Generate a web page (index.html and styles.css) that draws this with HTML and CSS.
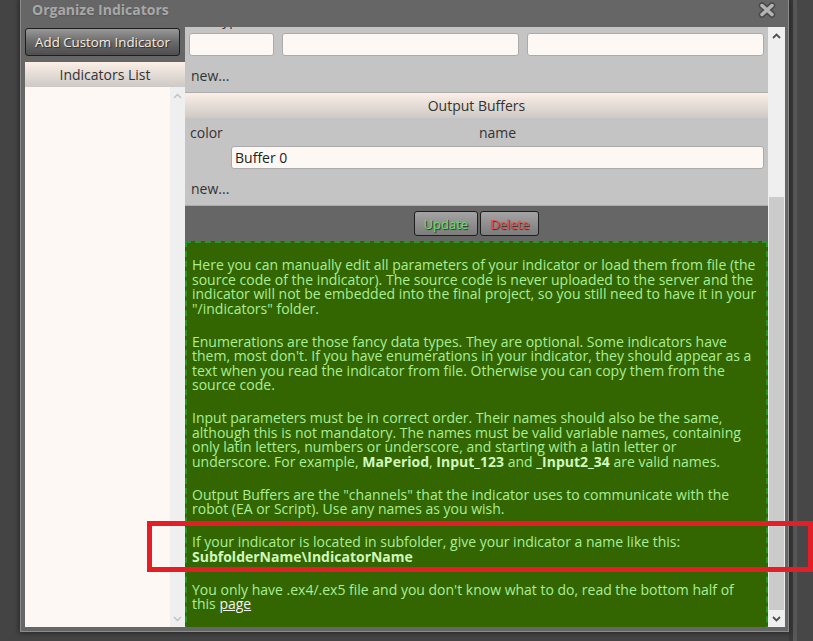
FILE: index.html
```html
<!DOCTYPE html>
<html>
<head>
<meta charset="utf-8">
<title>Organize Indicators</title>
<link rel="stylesheet" href="styles.css">
</head>
<body>
<div class="dialog">
  <div class="titlebar">
    <span class="title">Organize Indicators</span>
    <svg class="close" width="18" height="16" viewBox="0 0 18 16">
      <path d="M4 3.5 L14 12.5 M14 3.5 L4 12.5" stroke="#4a4a4a" stroke-width="6.5" stroke-linecap="round" fill="none"/>
      <path d="M4 3.5 L14 12.5 M14 3.5 L4 12.5" stroke="#b4b4b4" stroke-width="3.5" stroke-linecap="round" fill="none"/>
    </svg>
  </div>
  <div class="body">
    <div class="left">
      <button class="btn add">Add Custom Indicator</button>
      <div class="list">
        <div class="list-head">Indicators List</div>
        <div class="list-body">
          <div class="list-items"></div>
          <div class="sb sb-list">
            <div class="arrow-box"><svg width="9" height="6" viewBox="0 0 9 6"><path d="M1 5 L4.5 1.5 L8 5" stroke="#c0c0c0" stroke-width="1.4" fill="none"/></svg></div>
            <div class="sb-space"></div>
            <div class="arrow-box"><svg width="9" height="6" viewBox="0 0 9 6"><path d="M1 1 L4.5 4.5 L8 1" stroke="#c0c0c0" stroke-width="1.4" fill="none"/></svg></div>
          </div>
        </div>
      </div>
    </div>
    <div class="right">
      <div class="viewport">
        <div class="scroll">
          <div class="sec">
            <div class="sec-head">Input Parameters</div>
            <div class="grid3 labels">
              <span>type</span><span>name</span><span>default value</span>
            </div>
            <div class="grid3 inputs">
              <div class="field"></div><div class="field"></div><div class="field"></div>
            </div>
            <div class="new">new...</div>
          </div>
          <div class="sec">
            <div class="sec-head">Output Buffers</div>
            <div class="grid2 labels">
              <span class="lbl-left">color</span><span>name</span>
            </div>
            <div class="grid2 inputs">
              <div></div><div class="field">Buffer 0</div>
            </div>
            <div class="new">new...</div>
          </div>
          <div class="actions">
            <button class="btn small update">Update</button>
            <button class="btn small delete">Delete</button>
          </div>
          <div class="help">
            <p>Here you can manually edit all parameters of your indicator or load them from file (the<br>source code of the indicator). The source code is never uploaded to the server and the<br>indicator will not be embedded into the final project, so you still need to have it in your<br>"/indicators" folder.</p>
            <p>Enumerations are those fancy data types. They are optional. Some indicators have<br>them, most don't. If you have enumerations in your indicator, they should appear as a<br>text when you read the indicator from file. Otherwise you can copy them from the<br>source code.</p>
            <p>Input parameters must be in correct order. Their names should also be the same,<br>although this is not mandatory. The names must be valid variable names, containing<br>only latin letters, numbers or underscore, and starting with a latin letter or<br>underscore. For example, <b>MaPeriod</b>, <b>Input_123</b> and <b>_Input2_34</b> are valid names.</p>
            <p>Output Buffers are the "channels" that the indicator uses to communicate with the<br>robot (EA or Script). Use any names as you wish.</p>
            <p>If your indicator is located in subfolder, give your indicator a name like this:<br><b>SubfolderName\IndicatorName</b></p>
            <p>You only have .ex4/.ex5 file and you don't know what to do, read the bottom half of<br>this <a href="#">page</a></p>
          </div>
        </div>
      </div>
      <div class="sb sb-main">
        <div class="arrow-box"><svg width="9" height="6" viewBox="0 0 9 6"><path d="M1 5 L4.5 1.5 L8 5" stroke="#505050" stroke-width="1.8" fill="none"/></svg></div>
        <div class="sb-space"></div>
        <div class="thumb"></div>
        <div class="arrow-box"><svg width="9" height="6" viewBox="0 0 9 6"><path d="M1 1 L4.5 4.5 L8 1" stroke="#505050" stroke-width="1.8" fill="none"/></svg></div>
      </div>
    </div>
  </div>
</div>
<div class="annot"></div>
</body>
</html>
```

FILE: styles.css
```css
* { box-sizing: border-box; }

body {
  margin: 0;
  width: 813px;
  height: 641px;
  overflow: hidden;
  position: relative;
  background: linear-gradient(to right, #444 0, #444 789px, #3a3a3a 789px, #3a3a3a 793px, #585858 793px, #585858 797px, #474747 797px);
  font-family: "Open Sans", "Noto Sans", sans-serif;
  font-size: 14px;
  color: #333;
}

.dialog {
  margin-left: 20px;
  width: 769px;
  height: 632px;
  background: #666;
  border: 1px solid #8c8c8c;
  border-top: none;
  box-shadow: 0 0 5px 1px #262626;
  display: flex;
  flex-direction: column;
}

.titlebar {
  height: 27px;
  flex: none;
  display: flex;
  justify-content: space-between;
  align-items: flex-start;
  padding: 0 12px 0 11px;
}

.title {
  font-weight: bold;
  font-size: 14px;
  line-height: 20px;
  color: #a8a8a8;
  text-shadow: 0 1px 1px #555;
}

.close { margin-top: 2px; }

.body {
  flex: 1;
  min-height: 0;
  display: flex;
  padding: 0 3px 4px 4px;
}

.left {
  width: 160px;
  flex: none;
  display: flex;
  flex-direction: column;
}

.btn {
  font-family: "Open Sans", "Noto Sans", sans-serif;
  border: 1px solid #1e1e1e;
  border-radius: 3px;
  cursor: pointer;
  padding: 0;
}

.add {
  margin-top: 1px;
  width: 155px;
  height: 28px;
  font-size: 13.3px;
  color: #f6ece3;
  text-shadow: 1px 1px 1px #2a2a2a;
  background: linear-gradient(#999, #6a6a6a 50%, #4e4e4e);
}

.list {
  margin-top: 6px;
  flex: 1;
  display: flex;
  flex-direction: column;
  background: #fdf8f4;
  min-height: 0;
}

.list-head {
  height: 25px;
  line-height: 25px;
  text-align: center;
  color: #333;
  background: linear-gradient(#fcefe6, #cdc9c6);
}

.list-body {
  flex: 1;
  display: flex;
}

.list-items { flex: 1; }

.sb {
  display: flex;
  flex-direction: column;
  background: #efefef;
}

.sb-list { width: 15px; }
.sb-main { width: 17px; }

.arrow-box {
  height: 17px;
  display: flex;
  align-items: center;
  justify-content: center;
  flex: none;
}

.sb-space { flex: 1; }

.thumb {
  height: 413px;
  margin: 0 1px;
  background: #cbcbcb;
  flex: none;
}

.right {
  flex: 1;
  min-width: 0;
  display: flex;
}

.viewport {
  flex: 1;
  overflow: hidden;
}

.scroll { margin-top: -47px; }

.sec {
  background: #c4c4c4;
  border-bottom: 1px solid #acacac;
}

.sec-head {
  height: 25px;
  line-height: 26px;
  text-align: center;
  color: #333;
  background: linear-gradient(#fcefe6, #cdc9c6);
}

.labels {
  padding-top: 5px;
  line-height: 20px;
  text-align: center;
}

.grid3 {
  display: grid;
  grid-template-columns: 85px 1fr 1fr;
  column-gap: 8px;
  padding-left: 4px;
  padding-right: 4px;
}

.grid2 {
  display: grid;
  grid-template-columns: 42px 1fr;
  padding-left: 4px;
  padding-right: 4px;
}

.lbl-left { text-align: left; padding-left: 1px; }

.inputs { padding-top: 3px; }

.field {
  height: 23px;
  line-height: 21px;
  padding-left: 3px;
  background: #fdf8f4;
  border: 1px solid #ababab;
  border-radius: 3px;
  color: #222;
}

.new {
  height: 36px;
  padding-top: 4px;
  line-height: 32px;
  padding-left: 6px;
  color: #333;
}

.actions {
  display: flex;
  justify-content: center;
  gap: 2px;
  padding: 5px 0;
}

.small {
  height: 25px;
  padding: 0 9px;
  font-size: 13px;
  background: linear-gradient(#a4a4a4, #7c7c7c);
  text-shadow: 1px 1px 1px #2b2b2b;
}

.update { color: #66dd66; }
.delete { color: #e84c4c; }

.help {
  background: #336600;
  border: 2px dashed #229922;
  padding: 15px 5px 20px;
  color: #a8ef98;
  font-size: 14px;
  line-height: 14.5px;
}

.help p {
  margin: 0 0 18.5px;
  white-space: nowrap;
}

.help b { color: #cff8bd; }

.help a {
  color: #f2f2f2;
  text-decoration: underline;
}

.annot {
  position: absolute;
  left: 147px;
  top: 521px;
  width: 666px;
  height: 51px;
  border: 5px solid #e41e26;
}
```
